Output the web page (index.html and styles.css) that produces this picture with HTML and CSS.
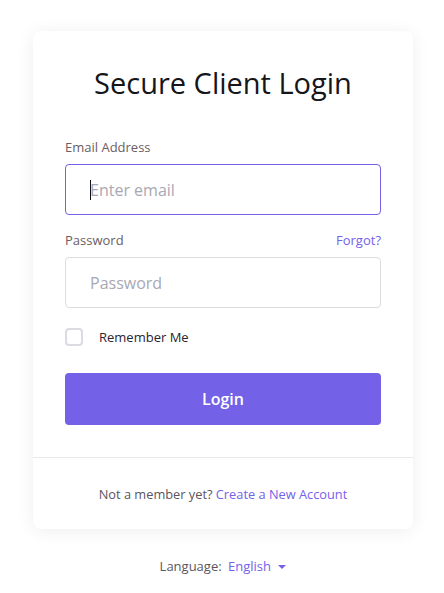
FILE: index.html
```html
<!DOCTYPE html>
<html>
<head>
<meta charset="utf-8">
<link rel="stylesheet" href="styles.css">
</head>
<body>
<div class="card">
  <div class="card-body">
    <h1 class="title">Secure Client Login</h1>
    <label class="label">Email Address</label>
    <div class="input focus"><span class="caret"></span><span class="ph">Enter email</span></div>
    <div class="label-row">
      <label class="label">Password</label>
      <a class="link">Forgot?</a>
    </div>
    <div class="input"><span class="ph">Password</span></div>
    <div class="check-row">
      <span class="checkbox"></span>
      <span class="check-label">Remember Me</span>
    </div>
    <div class="btn">Login</div>
  </div>
  <div class="card-footer">
    Not a member yet? <a class="link">Create a New Account</a>
  </div>
</div>
<div class="lang">Language: <a class="link lang-link">English <span class="tri"></span></a></div>
</body>
</html>
```

FILE: styles.css
```css
html, body {
  margin: 0;
  background: #ffffff;
}
body {
  font-family: "Open Sans", "Noto Sans", sans-serif;
  padding: 31px 0 0 2px;
  color: #5b5560;
}
.card {
  width: 380px;
  margin: 0 auto;
  background: #fff;
  border-radius: 8px;
  box-shadow: 0 2px 18px rgba(0,0,0,0.07);
}
.card-body {
  padding: 30px 32px 32px;
  display: flex;
  flex-direction: column;
}
.title {
  margin: 0 0 32px;
  font-size: 29px;
  line-height: 44px;
  font-weight: 400;
  text-align: center;
  color: #16151a;
}
.label {
  font-size: 13px;
  line-height: 20px;
  color: #6b5d63;
}
.label-row {
  display: flex;
  justify-content: space-between;
  margin-top: 15px;
}
.link {
  color: #7461e8;
  text-decoration: none;
}
.label-row .link {
  font-size: 13px;
  line-height: 20px;
}
.input {
  margin-top: 7px;
  height: 51px;
  box-sizing: border-box;
  border: 1px solid #dddbe0;
  border-radius: 4px;
  display: flex;
  align-items: center;
  padding-left: 24px;
  font-size: 16px;
  color: #a8a8b3;
}
.input.focus {
  border-color: #7461e8;
}
.caret {
  width: 1px;
  height: 20px;
  background: #111;
  margin-right: -1px;
}
.check-row {
  display: flex;
  align-items: center;
  margin-top: 19px;
  height: 19px;
}
.checkbox {
  width: 18px;
  height: 18px;
  box-sizing: border-box;
  border: 2px solid #dcdbe2;
  border-radius: 4px;
}
.check-label {
  margin-left: 16px;
  font-size: 13px;
  color: #2a2430;
}
.btn {
  margin-top: 27px;
  height: 52px;
  background: #7362e7;
  border-radius: 4px;
  color: #fff;
  font-size: 16px;
  font-weight: 600;
  display: flex;
  align-items: center;
  justify-content: center;
}
.card-footer {
  border-top: 1px solid #e9e8ec;
  padding: 26px 0 25px;
  text-align: center;
  font-size: 12.8px;
  line-height: 20px;
  color: #5b5560;
}
.lang {
  margin-top: 27px;
  text-align: center;
  font-size: 13px;
  line-height: 20px;
  color: #5b5560;
}
.lang-link {
  margin-left: 3px;
}
.tri {
  display: inline-block;
  width: 0;
  height: 0;
  border-left: 4px solid transparent;
  border-right: 4px solid transparent;
  border-top: 4px solid #7461e8;
  vertical-align: middle;
  margin-left: 4px;
  margin-bottom: 2px;
}
```
